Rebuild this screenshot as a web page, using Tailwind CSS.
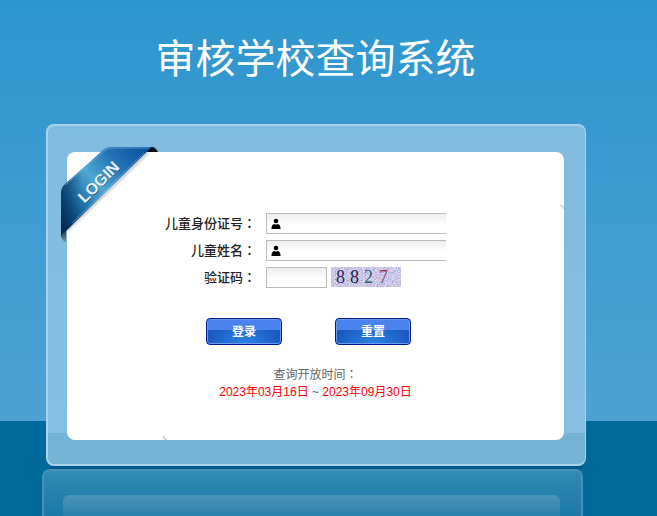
<!DOCTYPE html>
<html lang="zh-CN">
<head>
    <meta charset="UTF-8">
    <meta name="viewport" content="width=device-width, initial-scale=1.0">
    <script src="https://cdn.jsdelivr.net/npm/@tailwindcss/browser@4"></script>
    <title>审核学校查询系统</title>
</head>
<body class="flex min-h-screen flex-col bg-[linear-gradient(to_bottom,#2d96cf_0px,#50a1d3_421px,#006a9b_421px)] font-['Liberation_Sans','Noto_Sans_CJK_SC',sans-serif] text-xs text-[#666]">
    <header class="pt-8 pb-11 pr-[26px] text-center">
        <h1 class="font-['Noto_Sans_CJK_SC',sans-serif] text-[40px] leading-[48px] font-normal text-white">审核学校查询系统</h1>
    </header>

    <main class="mr-[71px] ml-[46px]">
        <div class="relative rounded-lg border-2 border-r border-[#a9d3ea] bg-[linear-gradient(to_bottom,#80bcdf_0px,#86bfe2_307px,#75b3d5_307px)] pt-[26px] pr-[21px] pb-6 pl-[19px]">
            <!-- Ribbon -->
            <svg class="absolute top-4 left-3 z-10 h-[104px] w-[104px]" viewBox="0 0 104 104" aria-hidden="true">
                <defs>
                    <linearGradient id="ribbon" gradientUnits="userSpaceOnUse" x1="4" y1="86" x2="88" y2="8">
                        <stop offset="0" stop-color="#06305e" />
                        <stop offset=".2" stop-color="#14659f" />
                        <stop offset=".48" stop-color="#4fa7d3" />
                        <stop offset=".72" stop-color="#2474b7" />
                        <stop offset="1" stop-color="#0d509a" />
                    </linearGradient>
                    <linearGradient id="edge" gradientUnits="userSpaceOnUse" x1="1" y1="0" x2="22" y2="0">
                        <stop offset="0" stop-color="#03264c" stop-opacity=".6" />
                        <stop offset="1" stop-color="#03264c" stop-opacity="0" />
                    </linearGradient>
                    <linearGradient id="fold" x1="0" y1="0" x2="0" y2="1">
                        <stop offset="0" stop-color="#05101c" />
                        <stop offset="1" stop-color="#6a6a6a" stop-opacity=".6" />
                    </linearGradient>
                    <filter id="soft" x="-20%" y="-20%" width="140%" height="140%"><feGaussianBlur stdDeviation="1" /></filter>
                </defs>
                <path d="M7 89 88 11" stroke="#000" stroke-opacity=".25" stroke-width="2" filter="url(#soft)" />
                <path d="M86 5h6q3 0 6 5H84z" fill="#060a10" />
                <path d="M1 88v6q1 5 5 6V86z" fill="url(#fold)" />
                <path d="M1 95V51q0-5 4-9L42 9q4-4 10-4h40L7 88q-5 3-6 7z" fill="url(#ribbon)" />
                <path d="M1 95V51q0-5 4-9L22 27v46L7 88q-5 3-6 7z" fill="url(#edge)" />
                <path d="M5 43 43 10q4-4 9-4h37" fill="none" stroke="#6fb2dc" stroke-opacity=".7" />
                <path d="M12 81 84 11" stroke="#b6dff0" stroke-opacity=".35" />
                <g transform="rotate(-45 39 39)" font-family="Liberation Sans" font-size="16" font-weight="bold" text-anchor="middle">
                    <text x="38" y="46" fill="#123f60" fill-opacity=".8">LOGIN</text>
                    <text x="38" y="45" fill="#e8f1f6">LOGIN</text>
                </g>
            </svg>

            <form class="relative flex min-h-72 flex-col rounded-lg bg-white pt-[61px]">
                <span class="absolute top-[53px] right-0 size-1 rounded-tr border-t border-r border-[#ccc]"></span>
                <span class="absolute bottom-0 left-24 size-1 rounded-bl border-b border-l border-[#bbb]"></span>

                <div class="grid grid-cols-[189px_1fr] items-center gap-x-[10px] gap-y-[6px]">
                    <label for="idNumber" class="h-[21px] text-right text-[13px] leading-[19px] font-medium text-[#222]">儿童身份证号<span class="font-['Noto_Sans_CJK_TC']" lang="zh-TW">：</span></label>
                    <div class="flex h-[21px] w-[180px] items-center border border-r-0 border-[#bbb] bg-linear-to-b from-[#eee] to-white to-60% pl-1">
                        <svg class="h-3 w-[10px] shrink-0" viewBox="0 0 10 12" aria-hidden="true"><circle cx="5" cy="3" r="2.3" /><path d="M.5 11Q.3 6.5 3.5 6L5 6.8 6.5 6Q9.7 6.5 9.5 11z" /></svg>
                        <input id="idNumber" type="text" class="h-full w-full min-w-0 bg-transparent px-1 outline-none">
                    </div>

                    <label for="childName" class="h-[21px] text-right text-[13px] leading-[19px] font-medium text-[#222]">儿童姓名<span class="font-['Noto_Sans_CJK_TC']" lang="zh-TW">：</span></label>
                    <div class="flex h-[21px] w-[180px] items-center border border-r-0 border-[#bbb] bg-linear-to-b from-[#eee] to-white to-60% pl-1">
                        <svg class="h-3 w-[10px] shrink-0" viewBox="0 0 10 12" aria-hidden="true"><circle cx="5" cy="3" r="2.3" /><path d="M.5 11Q.3 6.5 3.5 6L5 6.8 6.5 6Q9.7 6.5 9.5 11z" /></svg>
                        <input id="childName" type="text" class="h-full w-full min-w-0 bg-transparent px-1 outline-none">
                    </div>

                    <label for="captcha" class="h-[21px] text-right text-[13px] leading-[19px] font-medium text-[#222]">验证码<span class="font-['Noto_Sans_CJK_TC']" lang="zh-TW">：</span></label>
                    <div class="flex gap-1">
                        <input id="captcha" type="text" class="h-[21px] w-[61px] border border-[#bbb] bg-linear-to-b from-[#eee] to-white to-60% px-1 outline-none">
                        <svg class="h-5 w-[70px]" viewBox="0 0 70 20" role="img" aria-label="8827">
                            <filter id="noise" x="0" y="0" width="100%" height="100%" color-interpolation-filters="sRGB">
                                <feTurbulence type="fractalNoise" baseFrequency=".9" numOctaves="3" seed="7" />
                                <feColorMatrix values=".8 .3 0 0 .24  .3 .8 0 0 .22  .2 .2 .5 0 .46  0 0 0 0 1" />
                            </filter>
                            <rect width="70" height="20" fill="#cfcdea" />
                            <rect width="70" height="20" filter="url(#noise)" opacity=".7" />
                            <g font-family="Liberation Serif" font-size="18">
                                <text x="5" y="16" fill="#33265c">8</text>
                                <text x="19" y="16" fill="#24183f">8</text>
                                <text x="33" y="16" fill="#2d5f7c">2</text>
                                <text x="48" y="16" fill="#8d3f66">7</text>
                            </g>
                        </svg>
                    </div>
                </div>

                <div class="mt-[30px] flex justify-center gap-[53px] pr-[14px]">
                    <button type="submit" class="h-[27px] w-[76px] rounded border border-[#001a8c] bg-[radial-gradient(ellipse_at_bottom,#2a86e6,#1a55bd_75%)] pt-px font-bold text-white shadow-[inset_0_0_0_1px_#6a9cf0,inset_0_11px_0_#4a82ee]">登录</button>
                    <button type="reset" class="h-[27px] w-[76px] rounded border border-[#001a8c] bg-[radial-gradient(ellipse_at_bottom,#2a86e6,#1a55bd_75%)] pt-px font-bold text-white shadow-[inset_0_0_0_1px_#6a9cf0,inset_0_11px_0_#4a82ee]">重置</button>
                </div>

                <div class="mt-[19px] text-center leading-[19px]">
                    <p class="h-[19px]">查询开放时间<span class="font-['Noto_Sans_CJK_TC']" lang="zh-TW">：</span></p>
                    <p class="h-[19px]"><span class="text-[#f00]">2023年03月16日</span> ~ <span class="text-[#f00]">2023年09月30日</span></p>
                </div>
            </form>
        </div>
    </main>

    <!-- Reflection -->
    <div class="mr-[74px] ml-[42px] flex flex-1 flex-col" aria-hidden="true">
        <div class="ml-2 h-[3px] bg-[#00578a]"></div>
        <div class="flex min-h-[47px] flex-1 flex-col rounded-t-lg border-x-2 border-t-2 border-[#4292ba] bg-linear-to-b from-[#338ab3] to-[#1b78a9] pt-6 pr-[21px] pl-[19px]">
            <div class="flex-1 rounded-t-md bg-linear-to-b from-[#4a95b8] to-[#297fac]"></div>
        </div>
    </div>
</body>
</html>
